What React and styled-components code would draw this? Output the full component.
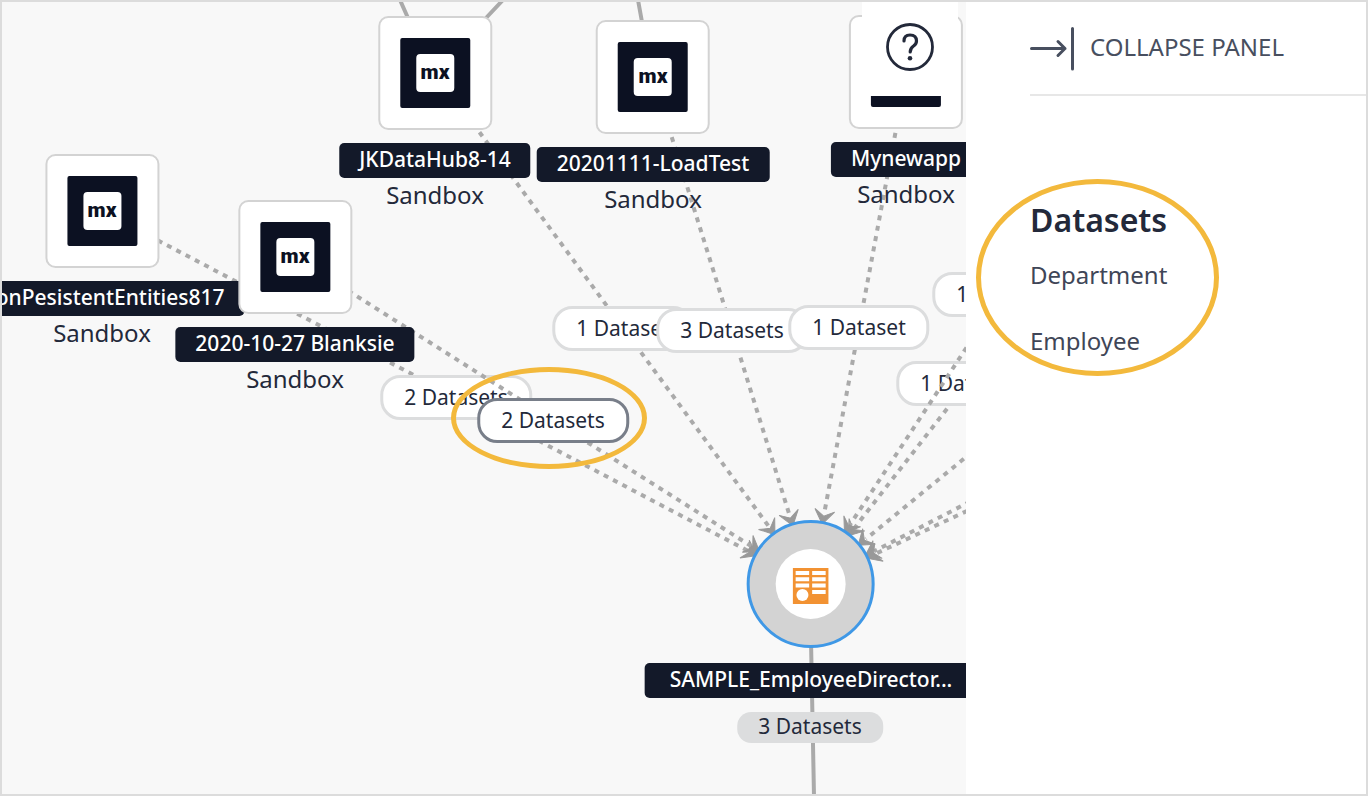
import React from 'react';
import styled, { createGlobalStyle } from 'styled-components';

const GlobalStyle = createGlobalStyle`
  *, *::before, *::after { box-sizing: border-box; }
  body {
    margin: 0;
    background: #fff;
    color: #23293a;
    font-family: "Noto Sans", "Open Sans", sans-serif;
  }
`;

const Page = styled.div`
  position: relative;
  display: flex;
  min-height: 100vh;

  &::after {
    content: "";
    position: absolute;
    inset: 0;
    border: 2px solid #dcdcdc;
    pointer-events: none;
  }
`;

const Canvas = styled.main`
  position: relative;
  flex: 1;
  min-width: 0;
  overflow: hidden;
  background: #f8f8f8;
`;

const EdgeLayer = styled.svg`
  position: absolute;
  inset: 0;
  width: 100%;
  height: 100%;
  pointer-events: none;
`;

const Place = styled.div`
  position: absolute;
  left: ${(p) => p.$x}px;
  top: ${(p) => p.$y}px;
  transform: translateX(-50%);
`;

const NodeStack = styled(Place)`
  display: flex;
  flex-direction: column;
  align-items: center;
`;

const Tile = styled.div`
  display: grid;
  place-items: center;
  width: 114px;
  height: 114px;
  background: #fff;
  border: 2px solid #d3d3d3;
  border-radius: 10px;
`;

const AppIcon = styled.div`
  display: grid;
  place-items: center;
  width: 70px;
  height: 70px;
  background: #0c1122;
  border-radius: 2px;
`;

const MxLogo = styled.div`
  width: 38px;
  height: 38px;
  background: #fff;
  border-radius: 4px;
  color: #0c1122;
  font: 900 21px/36px Roboto, sans-serif;
  text-align: center;
`;

const NodeName = styled.div`
  height: 35px;
  margin-top: ${(p) => (p.$wide ? 15 : 13)}px;
  padding: 0 ${(p) => (p.$wide ? 25 : 20)}px;
  background: #131929;
  border-radius: 5px;
  color: #fff;
  font-size: 21px;
  font-weight: 500;
  line-height: 33px;
  white-space: nowrap;
`;

const NodeKind = styled.div`
  font-size: 24px;
  line-height: 34px;
`;

const Hub = styled.div`
  display: grid;
  place-items: center;
  width: 128px;
  height: 128px;
  background: #d3d3d3;
  border: 3px solid #3f98e6;
  border-radius: 50%;
`;

const HubDisc = styled.div`
  display: grid;
  place-items: center;
  width: 70px;
  height: 70px;
  padding-top: 4px;
  background: #fff;
  border-radius: 50%;
`;

const Pill = styled.button`
  position: absolute;
  left: ${(p) => p.$x}px;
  top: ${(p) => p.$y}px;
  transform: translateX(-50%);
  height: 45px;
  padding: 0 21px;
  background: #fff;
  border: 3px solid ${(p) => (p.$selected ? '#787e89' : '#dcddde')};
  border-radius: 20px;
  color: #23293a;
  font: 400 21px/37px "Noto Sans", "Open Sans", sans-serif;
  white-space: nowrap;
`;

const CountBadge = styled(Place)`
  height: 31px;
  padding: 0 21px;
  background: #dcddde;
  border-radius: 14px;
  font-size: 21px;
  line-height: 29px;
  white-space: nowrap;
`;

const HelpButton = styled.button`
  position: absolute;
  left: 862px;
  top: 0;
  display: flex;
  justify-content: center;
  width: 96px;
  height: 96px;
  padding: 22px 0 0;
  background: #fff;
  border: 0;
`;

const Ring = styled.div`
  position: absolute;
  left: ${(p) => p.$x}px;
  top: ${(p) => p.$y}px;
  width: ${(p) => p.$w}px;
  height: ${(p) => p.$h}px;
  border: 5px solid #f3b93c;
  border-radius: 50%;
  pointer-events: none;
`;

const Panel = styled.aside`
  position: relative;
  width: 402px;
  flex: none;
  padding-left: 64px;
  background: #fff;
`;

const PanelHeader = styled.header`
  height: 96px;
  border-bottom: 2px solid #e7e7e7;
`;

const CollapseButton = styled.button`
  display: flex;
  align-items: center;
  gap: 16px;
  height: 94px;
  padding: 0;
  background: none;
  border: 0;
  color: #484f5f;
  font: 400 24px/32px "Noto Sans", "Open Sans", sans-serif;
`;

const DatasetSection = styled.section`
  padding-top: 104px;
`;

const DatasetTitle = styled.h2`
  margin: 0;
  font-size: 32px;
  font-weight: 600;
  line-height: 40px;
`;

const DatasetList = styled.ul`
  display: flex;
  flex-direction: column;
  gap: 30px;
  margin: 17px 0 0;
  padding: 0;
  list-style: none;
`;

const DatasetItem = styled.li`
  color: #3f4657;
  font-size: 24px;
  line-height: 36px;
`;

const HUB = { x: 811, y: 584, r: 63 };

function Edge({ x, y }) {
  const angle = Math.atan2(HUB.y - y, HUB.x - x);
  const tipX = HUB.x - Math.cos(angle) * HUB.r;
  const tipY = HUB.y - Math.sin(angle) * HUB.r;
  const endX = tipX - Math.cos(angle) * 8;
  const endY = tipY - Math.sin(angle) * 8;
  return (
    <EdgeLayer aria-hidden="true">
      <line x1={x} y1={y} x2={endX} y2={endY} stroke="#aaa" strokeWidth="4" strokeDasharray="5 5.5" />
      <path
        d="M2 0 L-12 -10 L-6 0 L-12 10 Z"
        fill="#999"
        stroke="#999"
        transform={`translate(${tipX} ${tipY}) rotate(${(angle * 180) / Math.PI})`}
      />
    </EdgeLayer>
  );
}

function DataSourceIcon() {
  return (
    <svg width="36" height="36" viewBox="0 0 36 36" aria-hidden="true">
      <rect width="36" height="36" fill="#f29232" />
      <path
        fill="#fff"
        d="M3 3h13.500v4H3zM19.500 3h13.500v4H19.500zM3 9.300h13.500v4H3zM19.500 9.300h13.500v4H19.500zM3 15.600h13.500v4H3zM19.500 15.600h13.500v4H19.500zM19.500 22h13.500v4H19.500z"
      />
      <circle cx="9.800" cy="27" r="6" fill="#fff" />
    </svg>
  );
}

function HelpIcon() {
  return (
    <svg width="50" height="50" viewBox="0 0 50 50" fill="none" stroke="#23293a" aria-hidden="true">
      <circle cx="25" cy="25" r="22.500" strokeWidth="2.800" />
      <path d="M19 19Q19 13 25 13Q31.500 13 31.500 19Q31.500 21.800 28.500 24Q25.200 26.300 25.200 30" strokeWidth="3.200" strokeLinecap="round" />
      <circle cx="25" cy="36.300" r="2.300" fill="#23293a" stroke="none" />
    </svg>
  );
}

function CollapseIcon() {
  return (
    <svg width="44" height="48" viewBox="0 0 44 48" fill="none" stroke="#484f5f" strokeWidth="3" strokeLinecap="round" strokeLinejoin="round" aria-hidden="true">
      <path d="M1.500 25.500H35M28 18.500L35 25.500L28 32.500M42.500 5.500V46" />
    </svg>
  );
}

function AppNode({ x, y, name }) {
  return (
    <NodeStack $x={x} $y={y}>
      <Tile>
        <AppIcon>
          <MxLogo>mx</MxLogo>
        </AppIcon>
      </Tile>
      <NodeName>{name}</NodeName>
      <NodeKind>Sandbox</NodeKind>
    </NodeStack>
  );
}

export default function App() {
  return (
    <>
      <GlobalStyle />
      <Page>
        <Canvas>
          <EdgeLayer aria-hidden="true">
            <path d="M400 0L408 18M503 0L486 18M638 0L642 22M811 640L814 796" stroke="#aaa" strokeWidth="4" fill="none" />
          </EdgeLayer>

          <Edge x={102} y={211} />
          <Pill $x={456} $y={375}>2 Datasets</Pill>
          <Edge x={295} y={257} />
          <Pill $x={553} $y={398} $selected>2 Datasets</Pill>

          <Edge x={436} y={73} />
          <Pill $x={623} $y={306}>1 Dataset</Pill>
          <Edge x={653} y={77} />
          <Pill $x={732} $y={308}>3 Datasets</Pill>
          <Edge x={907} y={71} />
          <Pill $x={859} $y={305}>1 Dataset</Pill>

          <Pill $x={1003} $y={272}>1 Dataset</Pill>
          <Edge x={1050} y={276} />
          <Pill $x={967} $y={361}>1 Dataset</Pill>
          <Edge x={1030} y={251} />
          <Edge x={1110} y={339} />
          <Edge x={1110} y={429} />
          <Edge x={1110} y={444} />

          <AppNode x={102} y={154} name="NonPesistentEntities817" />
          <AppNode x={295} y={200} name="2020-10-27 Blanksie" />
          <AppNode x={435} y={16} name="JKDataHub8-14" />
          <AppNode x={653} y={20} name="20201111-LoadTest" />
          <AppNode x={906} y={15} name="Mynewapp" />

          <HelpButton aria-label="Help">
            <HelpIcon />
          </HelpButton>

          <NodeStack $x={811} $y={520}>
            <Hub>
              <HubDisc>
                <DataSourceIcon />
              </HubDisc>
            </Hub>
            <NodeName $wide>SAMPLE_EmployeeDirector...</NodeName>
          </NodeStack>
          <CountBadge $x={810} $y={712}>3 Datasets</CountBadge>

          <Ring $x={451} $y={367} $w={196} $h={102} />
        </Canvas>

        <Panel>
          <PanelHeader>
            <CollapseButton>
              <CollapseIcon />
              COLLAPSE PANEL
            </CollapseButton>
          </PanelHeader>
          <DatasetSection>
            <DatasetTitle>Datasets</DatasetTitle>
            <DatasetList>
              <DatasetItem>Department</DatasetItem>
              <DatasetItem>Employee</DatasetItem>
            </DatasetList>
          </DatasetSection>
          <Ring $x={10} $y={179} $w={243} $h={197} />
        </Panel>
      </Page>
    </>
  );
}
